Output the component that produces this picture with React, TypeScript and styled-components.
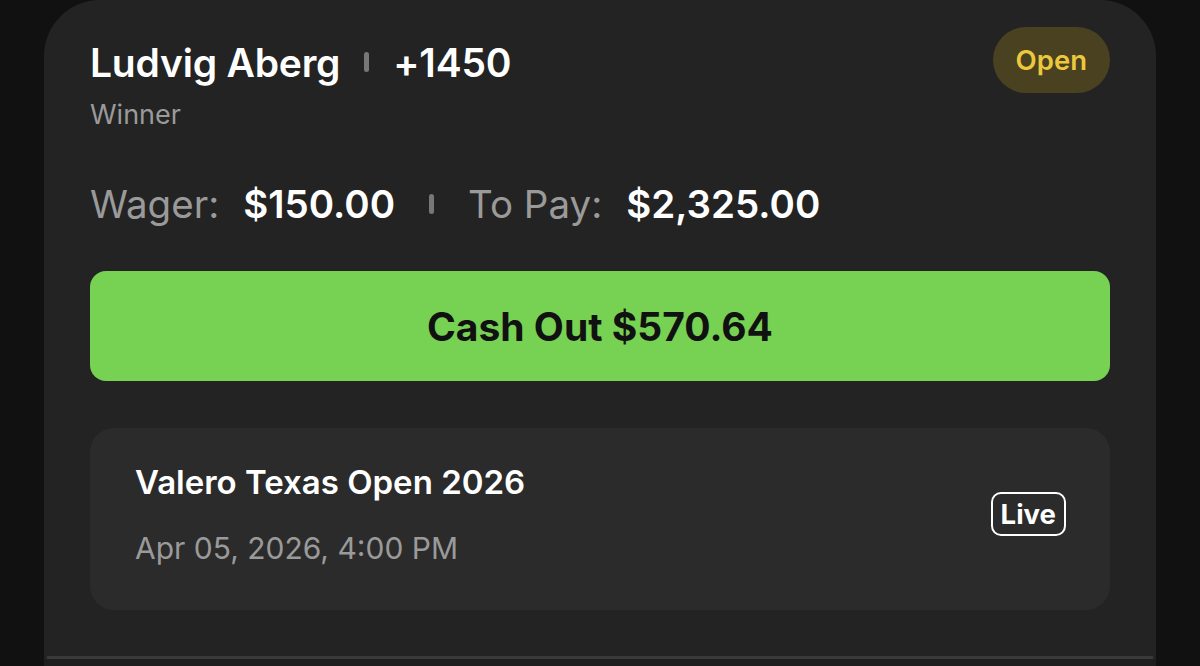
import styled, { createGlobalStyle } from 'styled-components';

const GlobalStyle = createGlobalStyle`
    html, body {
        margin: 0;
        padding: 0;
        background: #111111;
        font-family: Inter, "Noto Sans", "Liberation Sans", sans-serif;
        -webkit-font-smoothing: antialiased;
    }
`;

const Page = styled.div`
    width: 1200px;
    height: 666px;
    overflow: hidden;
    background: #111111;
    padding: 0 44px;
    box-sizing: border-box;
`;

const Card = styled.div`
    background: #232323;
    border-radius: 56px 56px 0 0;
    padding: 27px 46px 0;
    height: 700px;
    box-sizing: border-box;
    display: flex;
    flex-direction: column;
`;

const Header = styled.div`
    display: flex;
    justify-content: space-between;
    align-items: flex-start;
`;

const TitleBlock = styled.div`
    display: flex;
    flex-direction: column;
`;

const TitleRow = styled.div`
    display: flex;
    align-items: center;
    height: 70px;
    color: #ffffff;
    font-size: 39px;
    font-weight: 600;
    letter-spacing: -0.2px;
`;

const Divider = styled.span<{ $h: number; $gap: number }>`
    display: inline-block;
    width: 5px;
    height: ${(p) => p.$h}px;
    border-radius: 3px;
    background: #777777;
    margin: 0 ${(p) => p.$gap}px;
`;

const Subtitle = styled.div`
    color: #9a9a9a;
    font-size: 27px;
    line-height: 32px;
    margin-top: 2px;
`;

const StatusBadge = styled.div`
    height: 66px;
    padding: 0 23px;
    border-radius: 33px;
    background: #4a4120;
    color: #ecc93c;
    font-size: 27.5px;
    font-weight: 600;
    display: flex;
    align-items: center;
`;

const AmountRow = styled.div`
    display: flex;
    align-items: center;
    height: 50px;
    margin-top: 48px;
    font-size: 38.5px;
`;

const Label = styled.span`
    color: #9a9a9a;
    font-weight: 400;
    margin-right: 24px;
`;

const Value = styled.span`
    color: #ffffff;
    font-weight: 600;
`;

const CashOutButton = styled.button`
    margin-top: 42px;
    height: 110px;
    width: 100%;
    border: none;
    border-radius: 16px;
    background: #77d152;
    color: #111111;
    font-family: inherit;
    font-size: 39px;
    font-weight: 700;
    cursor: pointer;
`;

const EventBox = styled.div`
    margin-top: 47px;
    height: 182px;
    border-radius: 24px;
    background: #2b2b2b;
    padding: 0 44px 0 45px;
    box-sizing: border-box;
    display: flex;
    align-items: center;
    justify-content: space-between;
`;

const EventInfo = styled.div`
    display: flex;
    flex-direction: column;
    gap: 26px;
    margin-top: -8px;
`;

const EventName = styled.div`
    color: #ffffff;
    font-size: 33px;
    font-weight: 600;
    line-height: 40px;
`;

const EventDate = styled.div`
    color: #9a9a9a;
    font-size: 30px;
    line-height: 40px;
`;

const LiveBadge = styled.div`
    border: 2.5px solid #ffffff;
    border-radius: 10px;
    color: #ffffff;
    font-size: 27.5px;
    font-weight: 700;
    padding: 2px 8px;
    line-height: 36px;
    margin-top: -10px;
`;

const BottomRule = styled.div`
    margin: 46px -43px 0;
    height: 3px;
    background: #3a3a3a;
`;

const Below = styled.div`
    flex: 1;
    margin: 0 -46px;
    background: #1e1e1e;
`;

export default function App() {
    return (
        <>
            <GlobalStyle />
            <Page>
                <Card>
                    <Header>
                        <TitleBlock>
                            <TitleRow>
                                Ludvig Aberg
                                <Divider $h={20} $gap={24} />
                                +1450
                            </TitleRow>
                            <Subtitle>Winner</Subtitle>
                        </TitleBlock>
                        <StatusBadge>Open</StatusBadge>
                    </Header>
                    <AmountRow>
                        <Label>Wager:</Label>
                        <Value>$150.00</Value>
                        <Divider $h={20} $gap={34} />
                        <Label>To Pay:</Label>
                        <Value>$2,325.00</Value>
                    </AmountRow>
                    <CashOutButton>Cash Out $570.64</CashOutButton>
                    <EventBox>
                        <EventInfo>
                            <EventName>Valero Texas Open 2026</EventName>
                            <EventDate>Apr 05, 2026, 4:00 PM</EventDate>
                        </EventInfo>
                        <LiveBadge>Live</LiveBadge>
                    </EventBox>
                    <BottomRule />
                    <Below />
                </Card>
            </Page>
        </>
    );
}
